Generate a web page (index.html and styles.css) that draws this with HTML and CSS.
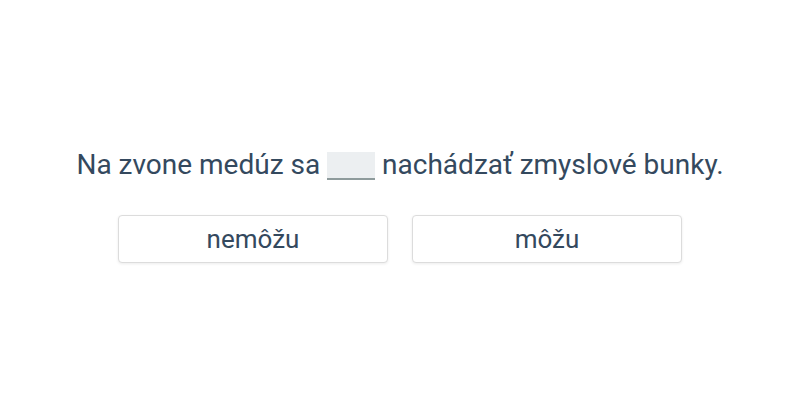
FILE: index.html
```html
<!DOCTYPE html>
<html>
<head>
<meta charset="utf-8">
<link rel="stylesheet" href="styles.css">
</head>
<body>
<div class="page">
  <div class="quiz">
    <p class="sentence">Na zvone medúz sa <span class="blank"></span> nachádzať zmyslové bunky.</p>
    <div class="options">
      <button class="option">nemôžu</button>
      <button class="option">môžu</button>
    </div>
  </div>
</div>
</body>
</html>
```
FILE: styles.css
```css
html, body {
  margin: 0;
  padding: 0;
  background: #ffffff;
}
.page {
  width: 800px;
  height: 400px;
  display: flex;
  align-items: center;
  justify-content: center;
  font-family: Roboto, "Liberation Sans", sans-serif;
  color: #34495e;
}
.quiz {
  display: flex;
  flex-direction: column;
  align-items: center;
  margin-top: 12px;
}
.sentence {
  margin: 0;
  font-size: 28px;
  line-height: 32px;
}
.blank {
  display: inline-block;
  width: 48px;
  height: 26px;
  background: #eceff1;
  border-bottom: 2px solid #8e9b9c;
  vertical-align: -6px;
}
.options {
  display: flex;
  gap: 24px;
  margin-top: 34px;
}
.option {
  width: 270px;
  height: 48px;
  background: #ffffff;
  border: 1px solid #dcdcdc;
  border-radius: 4px;
  box-shadow: 0 1px 3px rgba(0,0,0,0.08);
  font-family: Roboto, "Liberation Sans", sans-serif;
  font-size: 26px;
  color: #34495e;
  padding: 0;
}
```
